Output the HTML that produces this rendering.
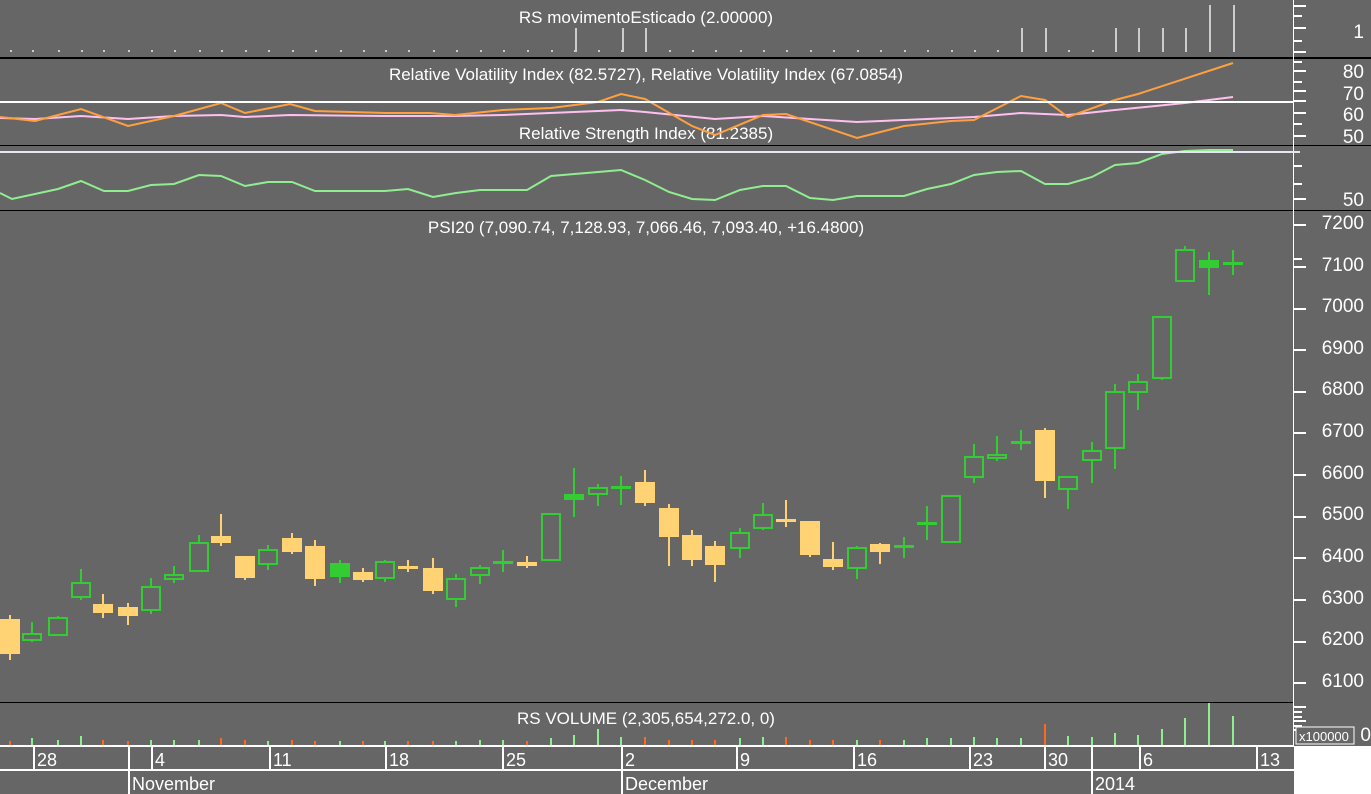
<!DOCTYPE html>
<html><head><meta charset="utf-8"><style>
html,body{margin:0;padding:0;background:#666;}
svg{display:block;font-family:"Liberation Sans",sans-serif;}
</style></head><body>
<svg id="s" width="1371" height="794" xmlns="http://www.w3.org/2000/svg">
<rect width="1371" height="794" fill="#666"/>
<rect x="1294" y="746" width="77" height="48" fill="#fff"/>
<g fill="#fff" font-size="17" text-anchor="middle">
<text x="646" y="23">RS movimentoEsticado (2.00000)</text>
<text x="646" y="80">Relative Volatility Index (82.5727), Relative Volatility Index (67.0854)</text>
<text x="646" y="139">Relative Strength Index (81.2385)</text>
<text x="646" y="233">PSI20 (7,090.74, 7,128.93, 7,066.46, 7,093.40, +16.4800)</text>
<text x="646" y="724">RS VOLUME (2,305,654,272.0, 0)</text>
</g>
<g fill="#fff" font-size="19" text-anchor="end">
<text x="1364" y="38">1</text>
<text x="1364" y="78">80</text>
<text x="1364" y="100">70</text>
<text x="1364" y="121">60</text>
<text x="1364" y="143">50</text>
<text x="1364" y="206">50</text>
<text x="1364" y="229">7200</text>
<text x="1364" y="271">7100</text>
<text x="1364" y="312">7000</text>
<text x="1364" y="354">6900</text>
<text x="1364" y="395">6800</text>
<text x="1364" y="437">6700</text>
<text x="1364" y="479">6600</text>
<text x="1364" y="520">6500</text>
<text x="1364" y="562">6400</text>
<text x="1364" y="604">6300</text>
<text x="1364" y="645">6200</text>
<text x="1364" y="687">6100</text>
<text x="1371" y="741">0</text>
</g>
<g id="g"></g>
<rect x="0" y="57" width="1371" height="2" fill="#000"/>
<rect x="0" y="145" width="1371" height="1" fill="#000"/>
<rect x="0" y="210" width="1371" height="1" fill="#000"/>
<rect x="0" y="702" width="1293" height="1" fill="#000"/>
<rect x="1293" y="0" width="1" height="746" fill="#fff"/>
<rect x="0" y="101" width="1293" height="2" fill="#fff"/>
<rect x="0" y="151" width="1300" height="2" fill="#e6e6f5"/>
<rect x="0" y="745" width="1294" height="2" fill="#fff"/>
<rect x="0" y="769" width="1294" height="2" fill="#fff"/>
<g fill="#fff">
<rect x="33" y="745" width="2" height="25"/><rect x="128" y="745" width="2" height="49"/><rect x="151" y="745" width="2" height="25"/>
<rect x="269" y="745" width="2" height="25"/><rect x="385" y="745" width="2" height="25"/><rect x="502" y="745" width="2" height="25"/>
<rect x="621" y="745" width="2" height="49"/><rect x="736" y="745" width="2" height="25"/><rect x="853" y="745" width="2" height="25"/>
<rect x="969" y="745" width="2" height="25"/><rect x="1044" y="745" width="2" height="25"/><rect x="1091" y="745" width="2" height="49"/>
<rect x="1139" y="745" width="2" height="25"/><rect x="1256" y="745" width="2" height="25"/>
</g>
<g fill="#fff" font-size="18">
<text x="37" y="766">28</text><text x="155" y="766">4</text><text x="273" y="766">11</text><text x="389" y="766">18</text>
<text x="506" y="766">25</text><text x="625" y="766">2</text><text x="740" y="766">9</text><text x="857" y="766">16</text>
<text x="973" y="766">23</text><text x="1048" y="766">30</text><text x="1143" y="766">6</text><text x="1260" y="766">13</text>
<text x="132" y="790">November</text><text x="625" y="790">December</text><text x="1095" y="790">2014</text>
</g>
<rect x="1296" y="727" width="58" height="17" fill="#666" stroke="#fff" stroke-width="1"/>
<text x="1299" y="741" fill="#fff" font-size="13">x100000</text>
</svg>
<script>
var C=[[10,'y',619,654,615,660],[32,'g',634,640,622,642],[58,'g',618,635,616,636],[81,'g',583,597,569,600],[103,'y',604,613,594,618],[128,'y',607,616,603,625],[151,'g',587,610,578,614],[174,'g',575,579,566,583],[199,'g',543,571,535,572],[221,'y',536,543,514,546],[245,'y',556,578,556,580],[268,'g',550,564,545,570],[292,'y',538,552,533,554],[315,'y',546,579,540,586],[340,'f',563,577,560,583],[363,'y',572,580,568,582],[385,'g',562,578,560,582],[408,'y',566,569,560,572],[433,'y',568,591,558,594],[456,'g',579,599,574,607],[480,'g',568,575,565,584],[503,'g',561,562,550,572],[527,'y',562,566,556,568],[551,'g',514,560,514,560],[574,'f',494,500,468,517],[598,'g',488,494,484,506],[621,'g',486,487,476,505],[645,'y',482,503,470,506],[669,'y',508,537,504,566],[692,'y',535,560,530,566],[715,'y',546,565,541,582],[740,'g',533,548,528,558],[763,'g',515,528,503,530],[786,'y',519,520,500,527],[810,'y',521,555,521,557],[833,'y',559,567,542,570],[857,'g',548,568,546,579],[880,'y',544,552,543,564],[904,'g',545,546,537,558],[927,'g',522,523,506,540],[951,'g',496,542,496,542],[974,'g',457,477,444,483],[997,'g',455,458,436,461],[1021,'g',441,442,430,450],[1045,'y',430,481,428,498],[1068,'g',477,489,476,509],[1092,'g',451,460,442,483],[1115,'g',392,448,384,469],[1138,'g',382,392,374,410],[1162,'g',317,378,317,380],[1185,'g',250,281,246,281],[1209,'f',260,268,252,295],[1233,'g',262,263,250,275]];
var h='';
C.forEach(function(c){var x=c[0],col=c[1]=='y'?'#ffd373':'#33cc33',t=c[2],b=c[3];
h+='<rect x="'+(x-1)+'" y="'+c[4]+'" width="2" height="'+(c[5]-c[4])+'" fill="'+col+'"/>';
if(b-t<3){h+='<rect x="'+(x-10)+'" y="'+t+'" width="20" height="3" fill="'+col+'"/>';}
else if(c[1]=='g'){h+='<rect x="'+(x-9)+'" y="'+t+'" width="18" height="'+(b-t)+'" fill="#666" stroke="'+col+'" stroke-width="2"/>';}
else{h+='<rect x="'+(x-10)+'" y="'+t+'" width="20" height="'+(b-t)+'" fill="'+col+'"/>';}
});
var bars=[[575,28],[622,28],[645,28],[1021,28],[1045,28],[1115,28],[1138,28],[1162,28],[1185,28],[1209,5],[1233,5]];
C.forEach(function(c){h+='<rect x="'+(c[0])+'" y="50" width="2" height="2" fill="#ccc"/>';});
bars.forEach(function(b){h+='<rect x="'+b[0]+'" y="'+b[1]+'" width="2" height="'+(52-b[1])+'" fill="#ccc"/>';});
var o=[[0,117],[35,121],[81,109],[128,126],[174,116],[221,103],[245,113],[290,104],[315,111],[385,113],[430,113],[455,115],[503,110],[551,108],[598,102],[621,94],[645,99],[692,126],[715,135],[763,115],[786,114],[857,138],[904,126],[951,121],[974,120],[1021,96],[1045,100],[1068,117],[1115,100],[1138,94],[1233,63]];
var p=[[0,118],[35,119],[81,116],[128,119],[174,116],[221,115],[245,117],[290,115],[385,116],[455,116],[503,115],[598,111],[621,110],[645,112],[715,119],[763,116],[857,122],[904,120],[974,117],[1021,113],[1068,115],[1115,110],[1185,103],[1233,97]];
var r=[[0,193],[12,199],[58,189],[81,181],[104,191],[128,191],[151,185],[174,184],[199,175],[221,176],[245,186],[268,182],[292,182],[315,191],[385,191],[408,189],[433,197],[456,193],[480,190],[527,190],[551,176],[598,172],[621,170],[645,180],[669,192],[692,199],[715,200],[740,190],[763,186],[786,186],[810,198],[833,200],[857,196],[880,196],[904,196],[927,189],[951,184],[974,175],[997,172],[1021,171],[1045,184],[1068,184],[1092,177],[1115,165],[1138,163],[1162,154],[1185,151],[1209,150],[1233,150]];
function pl(a,col){return '<polyline fill="none" stroke="'+col+'" stroke-width="2" points="'+a.map(function(q){return q.join(',')}).join(' ')+'"/>';}
h+=pl(p,'#ffc0f0')+pl(o,'#ffa040')+pl(r,'#90ee90');
var vol=[[10,741,'o'],[32,738,'g'],[58,740,'g'],[81,736,'g'],[103,740,'o'],[128,741,'o'],[151,740,'g'],[174,740,'g'],[199,740,'g'],[221,738,'o'],[245,740,'o'],[268,741,'g'],[292,740,'o'],[315,741,'o'],[340,741,'g'],[363,741,'o'],[385,741,'g'],[408,741,'o'],[433,741,'o'],[456,741,'g'],[480,740,'g'],[503,740,'g'],[527,741,'o'],[551,738,'g'],[574,735,'g'],[598,729,'g'],[621,737,'g'],[645,737,'o'],[669,740,'o'],[692,740,'o'],[715,740,'o'],[740,738,'g'],[763,737,'g'],[786,737,'o'],[810,740,'o'],[833,740,'o'],[857,740,'g'],[880,740,'o'],[904,740,'g'],[927,738,'g'],[951,738,'g'],[974,737,'g'],[997,738,'g'],[1021,738,'g'],[1045,724,'o'],[1068,736,'g'],[1092,737,'g'],[1115,733,'g'],[1138,735,'g'],[1162,729,'g'],[1185,718,'g'],[1209,703,'g'],[1233,716,'g']];
vol.forEach(function(v){h+='<rect x="'+(v[0]-1)+'" y="'+v[1]+'" width="2" height="'+(745-v[1])+'" fill="'+(v[2]=='o'?'#ff6820':'#90ee90')+'"/>';});
var tk=[[5,12],[15,8],[27,12],[40,8],[51,12],[61,8],[70,12],[81,8],[90,12],[100,12],[112,12],[123,8],[135,12],[165,8],[183,8],[198,12],[224,12],[258,8],[266,12],[308,12],[349,12],[391,12],[432,12],[474,12],[516,12],[557,12],[599,12],[641,12],[682,12],[706,12],[711,8],[716,8],[720,12],[725,8],[729,8]];
tk.forEach(function(t){h+='<rect x="1294" y="'+t[0]+'" width="'+t[1]+'" height="2" fill="#fff"/>';});
document.getElementById('g').innerHTML=h;
</script>
</body></html>
